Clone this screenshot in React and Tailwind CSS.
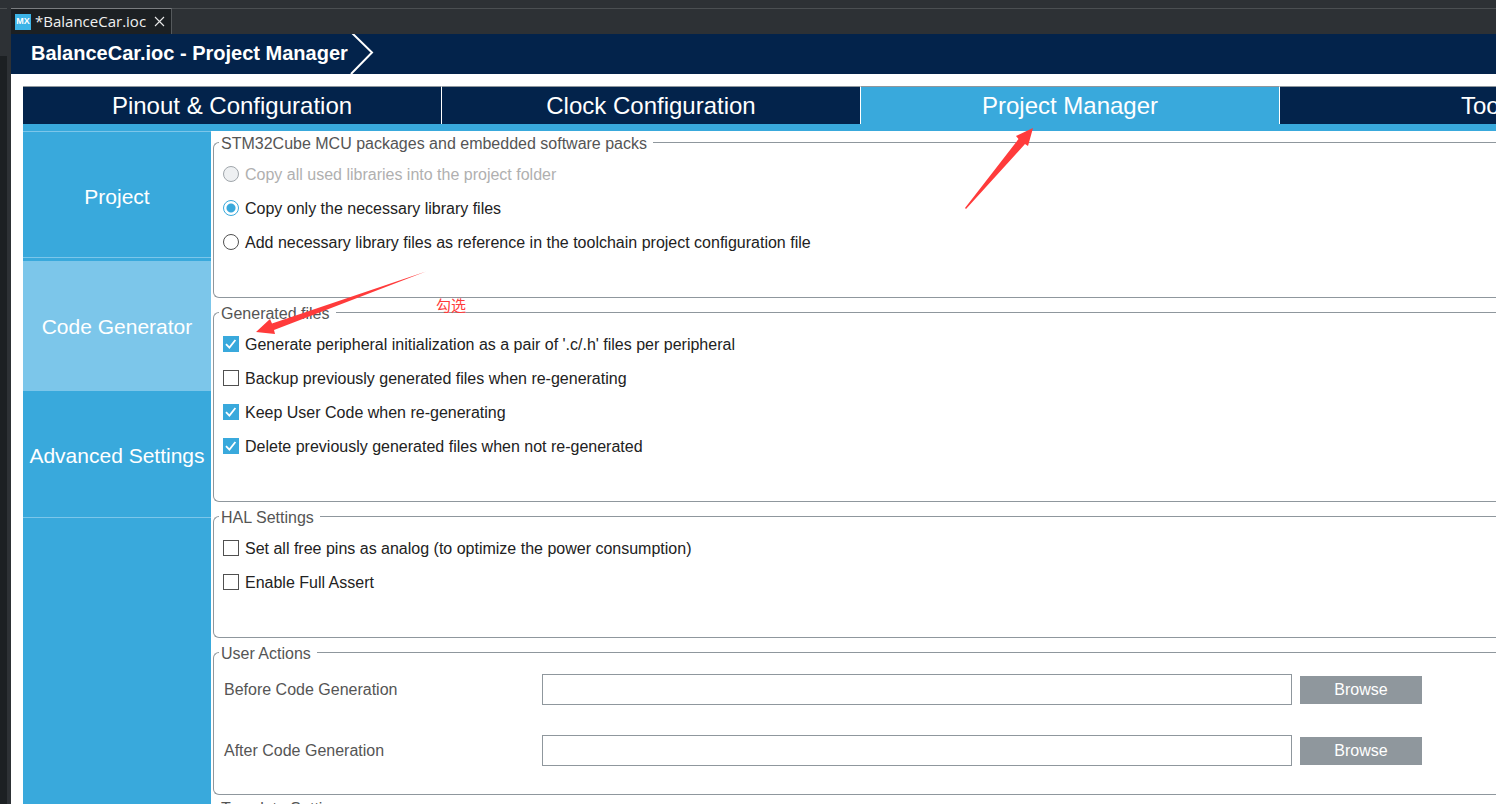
import React from "react";

function Group({ title, className, children }) {
  return (
    <fieldset className={`rounded-l-md border border-r-0 border-[#8f979d] pl-[9px] ${className}`}>
      <legend className="-ml-1 h-5 px-0.5 text-base leading-6 text-[#555]">
        <span className="pr-1">{title}</span>
      </legend>
      {children}
    </fieldset>
  );
}

function Radio({ label, ...props }) {
  return (
    <label className="flex h-[34px] items-center gap-[6px] has-disabled:text-[#b0b0b0]">
      <input
        type="radio"
        name="packages"
        className="size-4 appearance-none rounded-full border border-[#505050] bg-white checked:border-[#39a9dc] checked:bg-[radial-gradient(circle,#39a9dc_4px,white_5px)] disabled:border-[#a0a6ab] disabled:bg-[#eef0f2]"
        {...props}
      />
      <span className="pt-0.5">{label}</span>
    </label>
  );
}

function Check({ label, checked }) {
  return (
    <label className="flex h-[34px] items-center gap-[6px]">
      <span className="grid">
        <input
          type="checkbox"
          defaultChecked={checked}
          className="peer col-start-1 row-start-1 size-4 appearance-none border border-[#505050] bg-white checked:border-[#39a9dc] checked:bg-[#39a9dc]"
        />
        <svg viewBox="0 0 16 16" className="pointer-events-none invisible col-start-1 row-start-1 size-4 peer-checked:visible" fill="none" stroke="white" strokeWidth="1.8">
          <path d="M3 8.2 6.4 11.6 12.4 4" />
        </svg>
      </span>
      <span className="pt-0.5">{label}</span>
    </label>
  );
}

function ActionRow({ id, label }) {
  return (
    <div className="flex h-[31px] items-center">
      <label htmlFor={id} className="w-[319px] shrink-0 pl-px text-[#555]">{label}</label>
      <input id={id} type="text" className="h-[31px] min-w-0 flex-1 border border-[#8f979d] bg-white px-2 outline-none" />
      <button type="button" className="ml-2 h-7 w-[122px] bg-[#8f979d] leading-7 text-white">Browse</button>
    </div>
  );
}

const tabs = ["Pinout & Configuration", "Clock Configuration", "Project Manager", "Tools"];

export default function App() {
  return (
    <div className="relative flex h-screen overflow-hidden bg-[#2d3135] font-['Liberation_Sans',Arial,sans-serif] text-base text-[#222]">
      <div className="flex w-[11px] shrink-0 flex-col pt-2">
        <div className="h-12 w-[7px] border-t border-[#4b4f52]" />
        <div className="w-[7px] flex-1 bg-[#1c2023]" />
      </div>

      <div className="flex min-w-0 flex-1 flex-col">
        <div className="flex h-[34px] shrink-0 pt-2">
          <div className="flex items-center border-t border-r border-[#7a7d80] border-r-[#55595c] bg-[#1c2023] pr-[6px] pl-1 font-['Open_Sans','Noto_Sans',sans-serif] text-[15px] text-[#f0f0f0]">
            <span className="flex size-4 items-center justify-center bg-[#3db4e7] font-['Liberation_Sans',Arial,sans-serif] text-[9px] font-bold text-white">MX</span>
            <span className="pl-1">*BalanceCar.ioc</span>
            <button type="button" aria-label="Close" className="ml-2">
              <svg viewBox="0 0 11 11" className="size-[11px]" stroke="#e8e8e8" strokeWidth="1.1">
                <path d="M1 1 10 10M10 1 1 10" />
              </svg>
            </button>
          </div>
          <div className="flex-1 border-t border-[#4b4f52]" />
        </div>

        <header className="flex h-10 shrink-0 items-center bg-[#03234b] pl-5 text-white">
          <h1 className="pb-0.5 text-[20px] font-bold">BalanceCar.ioc - Project Manager</h1>
          <svg viewBox="0 0 24 40" className="ml-0.5 h-10 w-6" fill="none" stroke="white" strokeWidth="2">
            <path d="M2 -1 22 18.5 1 40" />
          </svg>
        </header>

        <main className="flex min-h-0 flex-1 flex-col bg-white pt-3 pl-3">
          <nav className="flex shrink-0 overflow-hidden border-b-[7px] border-[#39a9dc]">
            {tabs.map((t) => (
              <button
                key={t}
                type="button"
                className={`h-[38px] w-[419px] shrink-0 border-t border-r border-t-[#8f979d] border-r-white text-[24px] leading-9 text-white ${
                  t === "Project Manager" ? "bg-[#39a9dc]" : "bg-[#03234b]"
                }`}
              >
                {t}
              </button>
            ))}
          </nav>

          <div className="flex min-h-0 flex-1">
            <aside className="flex w-[188px] shrink-0 flex-col bg-[#39a9dc] text-[21px] text-white">
              <button type="button" className="h-[127px] border-y border-[#7cc6ea] pt-1">Project</button>
              <button type="button" className="mt-[3px] h-[130px] bg-[#7cc6ea] pt-0.5">Code Generator</button>
              <button type="button" className="h-[127px] border-b border-[#7cc6ea] pt-1">Advanced Settings</button>
            </aside>

            <section className="min-w-0 flex-1 overflow-hidden pt-px pl-[2px]">
              <Group title="STM32Cube MCU packages and embedded software packs" className="h-[166px]">
                <div className="pt-[5px]">
                  <Radio label="Copy all used libraries into the project folder" disabled />
                  <Radio label="Copy only the necessary library files" defaultChecked />
                  <Radio label="Add necessary library files as reference in the toolchain project configuration file" />
                </div>
              </Group>
              <Group title="Generated files" className="mt-1 h-[200px]">
                <div className="pt-[5px]">
                  <Check label="Generate peripheral initialization as a pair of '.c/.h' files per peripheral" checked />
                  <Check label="Backup previously generated files when re-generating" />
                  <Check label="Keep User Code when re-generating" checked />
                  <Check label="Delete previously generated files when not re-generated" checked />
                </div>
              </Group>
              <Group title="HAL Settings" className="mt-1 h-[132px]">
                <div className="pt-[5px]">
                  <Check label="Set all free pins as analog (to optimize the power consumption)" />
                  <Check label="Enable Full Assert" />
                </div>
              </Group>
              <Group title="User Actions" className="mt-1 h-[153px]">
                <div className="flex flex-col gap-[30px] pt-3 pr-[74px]">
                  <ActionRow id="before" label="Before Code Generation" />
                  <ActionRow id="after" label="After Code Generation" />
                </div>
              </Group>
              <Group title="Template Settings" className="mt-0.5 h-[120px]" />
            </section>
          </div>
        </main>
      </div>

      <svg viewBox="0 0 70 82" className="pointer-events-none absolute top-[128px] left-[964px] h-[82px] w-[70px]" fill="#ff3b3b">
        <path d="M69 0 52 8 54.5 11 1 80 2 81 61 16 64 18Z" />
      </svg>
      <svg viewBox="0 0 172 66" className="pointer-events-none absolute top-[270px] left-[256px] h-[66px] w-[172px]" fill="#ff3b3b">
        <path d="M0 62 14 49 16 53.5 170 1.5 18 60 19 64Z" />
      </svg>
      <span className="absolute top-[295px] left-[436px] font-['Noto_Sans_CJK_SC',sans-serif] text-[15px] leading-5 text-[#ff3b3b]">勾选</span>
    </div>
  );
}
